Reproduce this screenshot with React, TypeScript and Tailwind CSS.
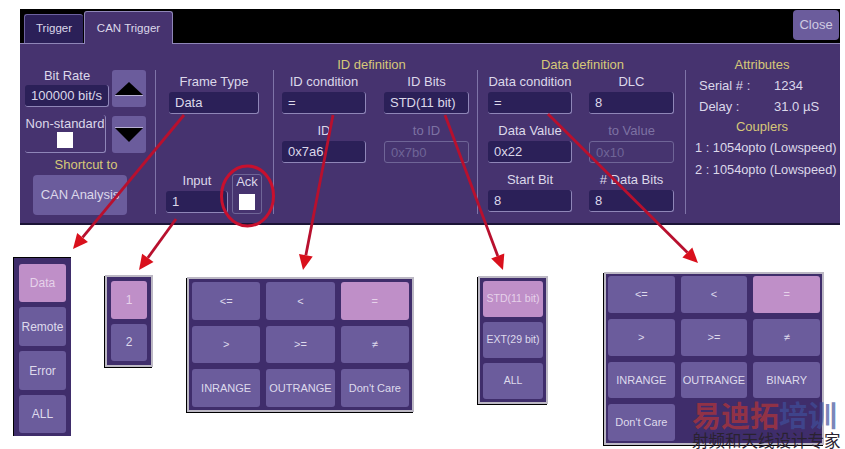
import React from 'react';

const Field: React.FC<{ label: string; value: string; dim?: boolean; className?: string }> = ({ label, value, dim, className = '' }) => (
  <div className={className}>
    <div className={`h-[18px] leading-[16px] text-center ${dim ? 'text-[#7d72a3]' : ''}`}>{label}</div>
    <div
      className={
        dim
          ? 'h-[22px] leading-[21px] pl-[6px] rounded-[3px] border border-[#6f6597] text-[#6f6597] bg-[#46346f]'
          : 'h-[22px] leading-[22px] pl-[6px] rounded-[3px] border-r border-b border-[#8f86b8] bg-[#2b2058]'
      }
    >
      {value}
    </div>
  </div>
);

const Divider = () => <div className="w-px h-[144px] mt-[26px] bg-[#7f74a8] shrink-0" />;

const Heading: React.FC<{ children: React.ReactNode }> = ({ children }) => (
  <div className="h-[17px] leading-[15px] text-center text-[#d6c878]">{children}</div>
);

const Check = () => <div className="w-[16px] h-[16px] bg-white mx-auto" />;

const PopBtn: React.FC<{ label: string; on?: boolean }> = ({ label, on }) => (
  <div
    className={`flex items-center justify-center rounded-[3px] whitespace-nowrap ${
      on ? 'bg-[#bf8fc8] text-[#e6d2ea]' : 'bg-[#6b5c9c] text-[#dedaec]'
    }`}
  >
    {label}
  </div>
);

const Arrow: React.FC<{ x1: number; y1: number; x2: number; y2: number }> = ({ x1, y1, x2, y2 }) => {
  const a = Math.atan2(y2 - y1, x2 - x1);
  const len = 15;
  const wid = 7;
  const bx = x2 - len * Math.cos(a);
  const by = y2 - len * Math.sin(a);
  const px = -Math.sin(a) * wid;
  const py = Math.cos(a) * wid;
  return (
    <g>
      <line x1={x1} y1={y1} x2={bx} y2={by} stroke="#b8102e" strokeWidth={2.8} />
      <polygon points={`${x2},${y2} ${bx + px},${by + py} ${bx - px},${by - py}`} fill="#d9101c" />
    </g>
  );
};

export default function App() {
  return (
    <div className="relative w-[845px] h-[449px] overflow-hidden bg-white font-['Liberation_Sans',sans-serif] text-[13px] text-[#dcd8ea]">
      <div className="pt-[9px] pl-[20px]">
        <div className="w-[820px] h-[216px] bg-black">
          {/* tab strip */}
          <div className="h-[34px] flex items-end">
            <div className="ml-[4px] w-[59px] h-[29px] leading-[26px] text-[11.5px] text-center rounded-t-[3px] border-t border-l border-[#6d62a0] bg-[#2b2058]">
              Trigger
            </div>
            <div className="relative ml-[1px] -mb-px w-[89px] h-[33px] leading-[32px] text-[11.5px] text-center rounded-t-[3px] border-t border-x border-[#8f86b8] bg-[#46336f]">
              CAN Trigger
            </div>
            <div className="ml-auto mr-[1px] mb-[3px] w-[46px] h-[30px] leading-[30px] text-center rounded-[4px] bg-[#6b5c9c] text-[#cfcbe2]">
              Close
            </div>
          </div>

          <div className="h-[182px] flex border-t border-[#8f86b8] bg-[#46336f] border-b-2 border-b-[#1b1436]">
            {/* bit rate */}
            <div className="w-[135px] shrink-0 pl-[5px]">
              <div className="flex gap-[3px] pt-[26px]">
                <div className="w-[84px]">
                  <div className="h-[15px] leading-[11px] text-center">Bit Rate</div>
                  <div className="h-[22px] leading-[22px] text-center rounded-[3px] border-r border-b border-[#8f86b8] bg-[#2b2058]">
                    100000 bit/s
                  </div>
                  <div className="mt-[8px] w-[81px] h-[38px] rounded-[3px] border-r border-b border-[#8f86b8] text-center leading-[17px] whitespace-nowrap">
                    Non-standard
                    <Check />
                  </div>
                </div>
                <div className="w-[34px]">
                  <div className="h-[37px] rounded-[3px] bg-[#6b5c9c] flex items-center justify-center">
                    <svg width="28" height="14" viewBox="0 0 28 14">
                      <polygon points="14,0 28,13 0,13" fill="#000" />
                      <line x1="0" y1="13.5" x2="28" y2="13.5" stroke="#b8b0d4" />
                    </svg>
                  </div>
                  <div className="mt-[9px] h-[37px] rounded-[3px] bg-[#6b5c9c] flex items-center justify-center">
                    <svg width="28" height="15" viewBox="0 0 28 15">
                      <line x1="0" y1="0.5" x2="28" y2="0.5" stroke="#b8b0d4" />
                      <polygon points="0,1 28,1 14,15" fill="#000" />
                    </svg>
                  </div>
                </div>
              </div>
              <div className="w-[122px] mt-[4px] h-[16px] leading-[16px] text-center text-[#d6c878]">Shortcut to</div>
              <div className="mt-[2px] ml-[8px] w-[94px] h-[40px] leading-[40px] text-center rounded-[4px] bg-[#6b5c9c]">CAN Analysis</div>
            </div>
            <Divider />

            {/* frame type */}
            <div className="w-[117px] shrink-0 pt-[30px]">
              <Field label="Frame Type" value="Data" className="ml-[13px] w-[90px]" />
              <div className="mt-[59px] ml-[10px] flex gap-[4px]">
                <Field label="Input" value="1" className="w-[62px]" />
                <div className="w-[30px] h-[40px] mt-px rounded-[3px] border border-[#6f6597] text-center leading-[14px]">
                  Ack
                  <div className="mt-[5px]">
                    <Check />
                  </div>
                </div>
              </div>
            </div>
            <Divider />

            {/* id definition */}
            <div className="w-[203px] shrink-0 pt-[13px] pl-[8px]">
              <div className="pr-[16px]">
                <Heading>ID definition</Heading>
              </div>
              <div className="grid grid-cols-[84px_85px] gap-x-[18px] gap-y-[9px]">
                <Field label="ID condition" value="=" />
                <Field label="ID Bits" value="STD(11 bit)" />
                <Field label="ID" value="0x7a6" />
                <Field label="to ID" value="0x7b0" dim />
              </div>
            </div>
            <Divider />

            {/* data definition */}
            <div className="w-[207px] shrink-0 pt-[13px] pl-[10px]">
              <div className="pr-[8px]">
                <Heading>Data definition</Heading>
              </div>
              <div className="grid grid-cols-[84px_85px] gap-x-[17px] gap-y-[9px]">
                <Field label="Data condition" value="=" />
                <Field label="DLC" value="8" />
                <Field label="Data Value" value="0x22" />
                <Field label="to Value" value="0x10" dim />
                <Field label="Start Bit" value="8" />
                <Field label="# Data Bits" value="8" />
              </div>
            </div>
            <Divider />

            {/* attributes */}
            <div className="flex-1 pt-[13px] whitespace-nowrap">
              <div className="pr-[2px]">
                <Heading>Attributes</Heading>
              </div>
              <div className="grid grid-cols-[75px_1fr] pl-[13px] leading-[21px] mt-[1px]">
                <div>Serial # :</div>
                <div>1234</div>
                <div>Delay :</div>
                <div>31.0 µS</div>
              </div>
              <div className="mt-[2px] pr-[2px]">
                <Heading>Couplers</Heading>
              </div>
              <div className="pl-[9px] mt-[1px] leading-[22px] text-[12.8px]">
                <div>1 : 1054opto (Lowspeed)</div>
                <div>2 : 1054opto (Lowspeed)</div>
              </div>
            </div>
          </div>
        </div>
      </div>

      {/* option popups scattered on the page */}
      <div className="absolute left-[13px] top-[257px] w-[58px] h-[179px] pt-[6px] px-[5px] grid grid-rows-[38px_39px_39px_38px] gap-y-[5px] text-[12px] bg-[#3f2d6b] border-l border-t border-black">
        <PopBtn label="Data" on />
        <PopBtn label="Remote" />
        <PopBtn label="Error" />
        <PopBtn label="ALL" />
      </div>

      <div className="absolute left-[105px] top-[275px] w-[48px] h-[92px] p-[4px] grid grid-rows-2 gap-y-[5px] text-[12px] bg-[#3f2d6b] border-2 border-[#bcb8c4] shadow-[-1px_1px_0_#000]">
        <PopBtn label="1" on />
        <PopBtn label="2" />
      </div>

      <div className="absolute left-[187px] top-[277px] w-[227px] h-[135px] p-[3px] grid grid-cols-3 grid-rows-3 gap-[6px] text-[11px] bg-[#3f2d6b] border-2 border-[#bcb8c4] shadow-[-1px_1px_0_#000]">
        <PopBtn label="<=" />
        <PopBtn label="<" />
        <PopBtn label="=" on />
        <PopBtn label=">" />
        <PopBtn label=">=" />
        <PopBtn label="≠" />
        <PopBtn label="INRANGE" />
        <PopBtn label="OUTRANGE" />
        <PopBtn label="Don't Care" />
      </div>

      <div className="absolute left-[478px] top-[276px] w-[70px] h-[128px] p-[3px] grid grid-rows-3 gap-y-[5px] text-[10.5px] bg-[#3f2d6b] border-2 border-[#bcb8c4] shadow-[-1px_1px_0_#000]">
        <PopBtn label="STD(11 bit)" on />
        <PopBtn label="EXT(29 bit)" />
        <PopBtn label="ALL" />
      </div>

      <div className="absolute left-[604px] top-[272px] w-[220px] h-[173px] p-[2px] grid grid-cols-3 grid-rows-4 gap-[6px] text-[11px] bg-[#3f2d6b] border-2 border-[#bcb8c4] shadow-[-1px_1px_0_#000]">
        <PopBtn label="<=" />
        <PopBtn label="<" />
        <PopBtn label="=" on />
        <PopBtn label=">" />
        <PopBtn label=">=" />
        <PopBtn label="≠" />
        <PopBtn label="INRANGE" />
        <PopBtn label="OUTRANGE" />
        <PopBtn label="BINARY" />
        <PopBtn label="Don't Care" />
      </div>

      {/* annotations */}
      <svg className="absolute inset-0" width="845" height="449" viewBox="0 0 845 449">
        <Arrow x1={184} y1={115} x2={73} y2={249} />
        <Arrow x1={176} y1={219} x2={139} y2={270} />
        <Arrow x1={333} y1={115} x2={303} y2={270} />
        <Arrow x1={445} y1={115} x2={503} y2={270} />
        <Arrow x1={548} y1={114} x2={698} y2={263} />
        <ellipse cx="247.5" cy="196" rx="26" ry="30" fill="none" stroke="#c8102e" strokeWidth="3" />
      </svg>

      {/* watermark */}
      <div className="absolute left-[692px] top-[398px] h-[32px] whitespace-nowrap font-['Noto_Sans_CJK_SC',sans-serif] text-[29px] leading-[32px] font-bold">
        <span className="text-[#a8343c]/80">易迪拓</span>
        <span className="text-[#3f4f9a]/70">培训</span>
      </div>
      <div className="absolute left-[692px] top-[431px] h-[18px] whitespace-nowrap font-['Noto_Sans_CJK_SC',sans-serif] text-[16.5px] leading-[18px] text-[#2a2230]">
        射频和天线设计专家
      </div>
    </div>
  );
}
